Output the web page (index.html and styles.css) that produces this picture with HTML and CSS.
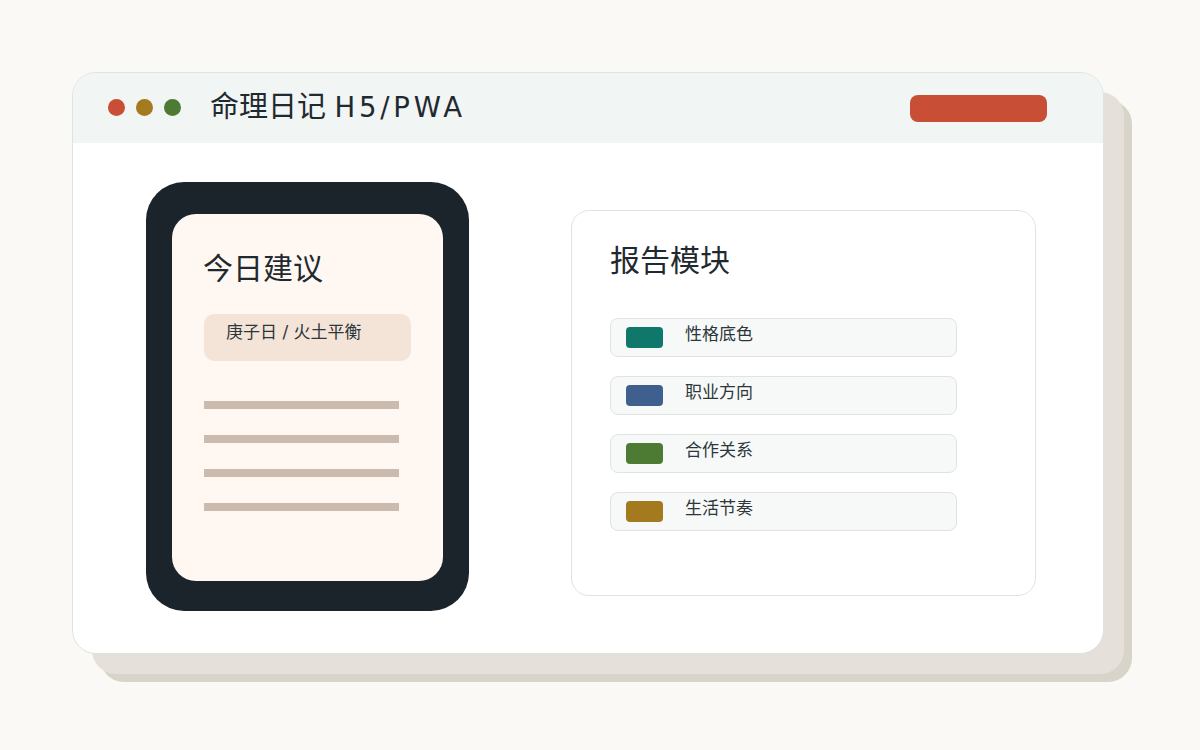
FILE: index.html
```html
<!DOCTYPE html>
<html lang="zh-CN">
<head>
    <meta charset="UTF-8">
    <meta name="viewport" content="width=device-width, initial-scale=1.0">
    <title>命理日记 H5/PWA</title>
    <link rel="stylesheet" href="styles.css">
</head>
<body>
    <div class="window">
        <div class="titlebar">
            <div class="dots">
                <span class="dot dot-red"></span>
                <span class="dot dot-gold"></span>
                <span class="dot dot-green"></span>
            </div>
            <h1 class="app-title">命理日记 <span class="app-title-latin">H5/PWA</span></h1>
            <div class="action-pill"></div>
        </div>

        <div class="content">
            <div class="phone">
                <div class="screen">
                    <h2 class="screen-title">今日建议</h2>
                    <div class="day-chip">庚子日 / 火土平衡</div>
                    <div class="text-lines">
                        <div class="text-line"></div>
                        <div class="text-line"></div>
                        <div class="text-line"></div>
                        <div class="text-line"></div>
                    </div>
                </div>
            </div>

            <div class="report-card">
                <h2 class="card-title">报告模块</h2>
                <div class="module-list">
                    <div class="module-item">
                        <span class="swatch swatch-teal"></span>
                        <span class="module-name">性格底色</span>
                    </div>
                    <div class="module-item">
                        <span class="swatch swatch-blue"></span>
                        <span class="module-name">职业方向</span>
                    </div>
                    <div class="module-item">
                        <span class="swatch swatch-green"></span>
                        <span class="module-name">合作关系</span>
                    </div>
                    <div class="module-item">
                        <span class="swatch swatch-gold"></span>
                        <span class="module-name">生活节奏</span>
                    </div>
                </div>
            </div>
        </div>
    </div>
</body>
</html>
```

FILE: styles.css
```css
* {
    margin: 0;
    padding: 0;
    box-sizing: border-box;
    font-family: "Noto Sans CJK SC", "Noto Sans", sans-serif;
}

body {
    background: #faf9f5;
    width: 1200px;
    height: 750px;
    overflow: hidden;
}

.window {
    margin: 72px 0 0 72px;
    width: 1032px;
    height: 582px;
    background: #fff;
    border: 1px solid #dce4e2;
    border-radius: 24px;
    box-shadow: 20px 20px 0 #e5e1da, 28px 28px 0 #d9d4c9;
    overflow: hidden;
}

/* title bar */
.titlebar {
    height: 70px;
    background: #f1f5f4;
    display: flex;
    align-items: center;
    padding: 0 56px 0 35px;
}

.dots {
    display: flex;
    gap: 11px;
    margin-bottom: 2px;
}

.dot {
    width: 17px;
    height: 17px;
    border-radius: 50%;
}

.dot-red { background: #c84e36; }
.dot-gold { background: #a47a1f; }
.dot-green { background: #4e7b34; }

.app-title {
    margin: 0 0 4px 29px;
    font-size: 29px;
    font-weight: 400;
    line-height: 1;
    color: #1f2a30;
}

.app-title-latin {
    margin-left: 2px;
    font-family: "DejaVu Sans", sans-serif;
    font-size: 27.5px;
    letter-spacing: 3.8px;
}

.action-pill {
    margin-left: auto;
    width: 137px;
    height: 27px;
    border-radius: 8px;
    background: #c84e36;
}

/* body */
.content {
    display: flex;
    align-items: flex-start;
    padding: 39px 0 0 73px;
}

.phone {
    width: 323px;
    height: 429px;
    background: #1b242a;
    border-radius: 38px;
    padding: 32px 26px 30px 26px;
}

.screen {
    height: 100%;
    background: #fff8f2;
    border-radius: 24px;
    padding: 37px 0 0 31px;
}

.screen-title {
    font-size: 30px;
    font-weight: 400;
    line-height: 1;
    color: #1f2a30;
}

.day-chip {
    margin: 33px 0 0 1px;
    width: 207px;
    height: 47px;
    background: #f4e4d8;
    border-radius: 10px;
    padding: 10px 0 0 22px;
    font-family: "DejaVu Sans", "Noto Sans CJK SC", sans-serif;
    font-size: 17px;
    line-height: 1;
    color: #2c363b;
}

.text-lines {
    margin: 40px 0 0 1px;
    display: flex;
    flex-direction: column;
    gap: 26px;
}

.text-line {
    width: 195px;
    height: 8px;
    background: #cbbbae;
}

.report-card {
    margin: 28px 0 0 102px;
    width: 465px;
    height: 386px;
    border: 1px solid #dde4e2;
    border-radius: 18px;
    padding: 32px 0 0 38px;
}

.card-title {
    font-size: 30px;
    font-weight: 400;
    line-height: 1;
    color: #1f2a30;
}

.module-list {
    margin-top: 45px;
    display: flex;
    flex-direction: column;
    gap: 19px;
}

.module-item {
    width: 347px;
    height: 39px;
    background: #f7f9f8;
    border: 1px solid #dde4e2;
    border-radius: 8px;
    display: flex;
    align-items: flex-start;
    padding: 5px 0 0 15px;
}

.swatch {
    margin-top: 3px;
    width: 37px;
    height: 21px;
    border-radius: 4px;
}

.swatch-teal { background: #10776b; }
.swatch-blue { background: #3f5f8e; }
.swatch-green { background: #4e7b34; }
.swatch-gold { background: #a47a1f; }

.module-name {
    margin-left: 22px;
    font-size: 17px;
    line-height: 1;
    color: #2c363b;
}
```
